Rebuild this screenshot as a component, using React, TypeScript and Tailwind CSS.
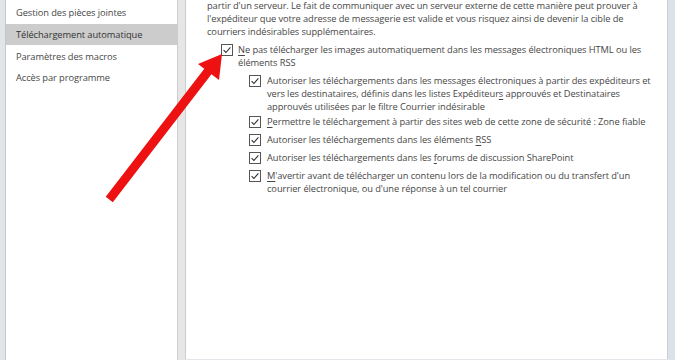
import React from "react";

const Check: React.FC = () => (
  <svg width="12" height="12" viewBox="0 0 12 12" className="shrink-0">
    <rect x="0.5" y="0.5" width="11" height="11" fill="#fff" stroke="#555" />
    <path d="M2.6 6.2 L4.9 8.5 L9.4 3.4" fill="none" stroke="#333" strokeWidth="1.1" />
  </svg>
);

const U: React.FC<{ children: React.ReactNode }> = ({ children }) => (
  <span className="underline underline-offset-[1.5px] decoration-[0.8px]">{children}</span>
);

const SubOption: React.FC<{ className?: string; children: React.ReactNode }> = ({ className = "", children }) => (
  <div className={`flex items-start gap-[6px] ${className}`}>
    <div className="pt-[0.5px]">
      <Check />
    </div>
    <p>{children}</p>
  </div>
);

const leftItems = [
  "Gestion des pièces jointes",
  "Téléchargement automatique",
  "Paramètres des macros",
  "Accès par programme",
];

export default function App() {
  return (
    <div
      className="relative w-[675px] h-[360px] flex bg-[#e2e6eb] overflow-hidden text-[9.3px] leading-[13px] tracking-[-0.08px] text-[#474747]"
      style={{ fontFamily: '"Open Sans", "Noto Sans", sans-serif' }}
    >
      {/* dialog frame, left */}
      <div className="w-[6px] h-full bg-[#e1e5ea] border-r border-[#c3c7cc]" />

      {/* category list */}
      <div className="w-[172px] h-full bg-white border-r border-[#cdcdcd] pt-[2px]">
        {leftItems.map((item, i) => (
          <div
            key={item}
            className={`h-[21.7px] flex items-center pl-[10px] ${
              i === 1 ? "bg-[#cccccc] text-[#333]" : ""
            }`}
          >
            {item}
          </div>
        ))}
      </div>

      {/* splitter */}
      <div className="w-[7px] h-full bg-[#e6e6e6]" />

      {/* settings panel */}
      <div className="flex-1 h-full bg-white border-x border-[#cdcdcd] pl-[21px] -mt-[1px]">
        <p>
          partir d'un serveur. Le fait de communiquer avec un serveur externe de cette manière peut prouver à
          <br />
          l'expéditeur que votre adresse de messagerie est valide et vous risquez ainsi de devenir la cible de
          <br />
          courriers indésirables supplémentaires.
        </p>

        <div className="flex items-start gap-[5px] mt-[5px] pl-[14px]">
          <div className="pt-[0.5px]">
            <Check />
          </div>
          <p>
            <U>N</U>e pas télécharger les images automatiquement dans les messages électroniques HTML ou les
            <br />
            éléments RSS
          </p>
        </div>

        <div className="pl-[42px] mt-[5px]">
          <SubOption>
            Autoriser les téléchargements dans les messages électroniques à partir des expéditeurs et
            <br />
            vers les destinataires, définis dans les listes Expéditeur<U>s</U> approuvés et Destinataires
            <br />
            approuvés utilisées par le filtre Courrier indésirable
          </SubOption>
          <SubOption className="mt-[2px]">
            <U>P</U>ermettre le téléchargement à partir des sites web de cette zone de sécurité : Zone fiable
          </SubOption>
          <SubOption className="mt-[5px]">
            Autoriser les téléchargements dans les éléments <U>R</U>SS
          </SubOption>
          <SubOption className="mt-[5px]">
            Autoriser les téléchargements dans les <U>f</U>orums de discussion SharePoint
          </SubOption>
          <SubOption className="mt-[5px]">
            <U>M</U>'avertir avant de télécharger un contenu lors de la modification ou du transfert d'un
            <br />
            courrier électronique, ou d'une réponse à un tel courrier
          </SubOption>
        </div>
      </div>

      {/* dialog frame, right */}
      <div className="w-[7px] h-full bg-[#dce2e9]" />

      {/* red annotation arrow */}
      <svg className="absolute left-0 top-0 pointer-events-none" width="675" height="360">
        <line x1="112" y1="196" x2="209" y2="70" stroke="#ee1111" strokeWidth="9" strokeLinecap="square" />
        <polygon points="222,54 198,64 219,80" fill="#ee1111" />
      </svg>
    </div>
  );
}
